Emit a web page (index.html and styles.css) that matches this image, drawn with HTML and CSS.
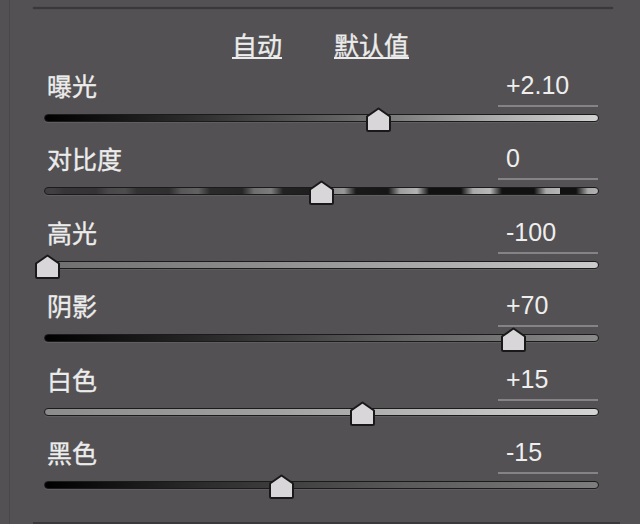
FILE: index.html
```html
<!DOCTYPE html>
<html lang="zh">
<head>
<meta charset="utf-8">
<link rel="stylesheet" href="styles.css">
</head>
<body>
<div class="frame">
  <div class="topline"></div>
  <div class="buttons">
    <span class="btn">自动</span>
    <span class="btn">默认值</span>
  </div>
  <div class="rows">
    <div class="row">
      <div class="head"><span class="label">曝光</span><span class="value">+2.10</span></div>
      <div class="track t-exposure"><svg class="thumb" style="left:320px" viewBox="0 0 27 25" width="27" height="25"><path d="M2 9.5 L13.5 1.5 L25 9.5 L25 22.5 Q25 24 23.5 24 L3.5 24 Q2 24 2 22.5 Z"/></svg></div>
    </div>
    <div class="row">
      <div class="head"><span class="label">对比度</span><span class="value">0</span></div>
      <div class="track t-contrast"><svg class="thumb" style="left:263px" viewBox="0 0 27 25" width="27" height="25"><path d="M2 9.5 L13.5 1.5 L25 9.5 L25 22.5 Q25 24 23.5 24 L3.5 24 Q2 24 2 22.5 Z"/></svg></div>
    </div>
    <div class="row">
      <div class="head"><span class="label">高光</span><span class="value">-100</span></div>
      <div class="track t-high"><svg class="thumb" style="left:-11px" viewBox="0 0 27 25" width="27" height="25"><path d="M2 9.5 L13.5 1.5 L25 9.5 L25 22.5 Q25 24 23.5 24 L3.5 24 Q2 24 2 22.5 Z"/></svg></div>
    </div>
    <div class="row">
      <div class="head"><span class="label">阴影</span><span class="value">+70</span></div>
      <div class="track t-shadow"><svg class="thumb" style="left:455px" viewBox="0 0 27 25" width="27" height="25"><path d="M2 9.5 L13.5 1.5 L25 9.5 L25 22.5 Q25 24 23.5 24 L3.5 24 Q2 24 2 22.5 Z"/></svg></div>
    </div>
    <div class="row">
      <div class="head"><span class="label">白色</span><span class="value">+15</span></div>
      <div class="track t-white"><svg class="thumb" style="left:304px" viewBox="0 0 27 25" width="27" height="25"><path d="M2 9.5 L13.5 1.5 L25 9.5 L25 22.5 Q25 24 23.5 24 L3.5 24 Q2 24 2 22.5 Z"/></svg></div>
    </div>
    <div class="row">
      <div class="head"><span class="label">黑色</span><span class="value">-15</span></div>
      <div class="track t-black"><svg class="thumb" style="left:223px" viewBox="0 0 27 25" width="27" height="25"><path d="M2 9.5 L13.5 1.5 L25 9.5 L25 22.5 Q25 24 23.5 24 L3.5 24 Q2 24 2 22.5 Z"/></svg></div>
    </div>
  </div>
  <div class="bottomline"></div>
</div>
</body>
</html>
```

FILE: styles.css
```css
html, body {
  margin: 0;
  padding: 0;
}
body {
  width: 640px;
  height: 524px;
  overflow: hidden;
  background: #535153;
  font-family: "Noto Sans CJK SC", "Noto Sans", sans-serif;
  color: #ececec;
}
.frame {
  position: relative;
  height: 524px;
  box-sizing: border-box;
  padding-top: 7px;
  border-left: 1px solid #4a484a;
  margin-left: 9px;
}
.topline {
  height: 2px;
  margin-left: 23px;
  width: 580px;
  background: #3a383a;
  box-shadow: 0 0 1px #3a383a;
}
.buttons {
  display: flex;
  justify-content: center;
  gap: 52px;
  margin-top: 20px;
  margin-left: -9px;
  height: 30px;
}
.btn {
  font-size: 25px;
  line-height: 30px;
  text-decoration: underline;
  text-decoration-thickness: 2px;
  text-underline-offset: 2px;
  -webkit-text-stroke: 0.35px #ececec;
}
.rows {
  margin-top: 11px;
  margin-left: 34px;
  width: 555px;
}
.row {
  height: 73.4px;
}
.head {
  display: flex;
  justify-content: space-between;
  align-items: flex-start;
}
.label {
  font-size: 25px;
  line-height: 30px;
  margin-left: 3px;
  -webkit-text-stroke: 0.35px #ececec;
}
.value {
  width: 92px;
  padding-left: 8px;
  margin-right: 1px;
  font-family: "Liberation Sans", Arial, sans-serif;
  font-size: 25px;
  line-height: 30px;
  padding-bottom: 5px;
  border-bottom: 2px solid #858385;
  color: #eeeeee;
}
.track {
  position: relative;
  margin-top: 7px;
  height: 8px;
  box-sizing: border-box;
  border: 1px solid #1c1b1c;
  border-radius: 4px;
  box-shadow: 0 1px 0 rgba(255,255,255,0.08);
}
.t-exposure {
  background: linear-gradient(90deg, #000 0%, #2a2a2a 25%, #666 55%, #a8a8a8 80%, #d2d2d2 100%);
}
.t-contrast {
  background:
    linear-gradient(90deg, rgba(58,56,58,0.95) 0%, rgba(58,56,58,0.8) 20%, rgba(58,56,58,0.4) 45%, rgba(58,56,58,0) 70%),
    repeating-linear-gradient(90deg, #111 0px, #111 16px, #a8a8a8 28px, #b8b8b8 45px, #111 57px, #111 73px);
  background-position: 0 0, -38px 0;
}
.t-high {
  background: linear-gradient(90deg, #6e6e6e 0%, #8e8e8e 40%, #b0b0b0 75%, #cccccc 100%);
}
.t-shadow {
  background: linear-gradient(90deg, #000 0%, #2a2a2a 30%, #606060 65%, #8a8a8a 100%);
}
.t-white {
  background: linear-gradient(90deg, #8c8c8c 0%, #a0a0a0 40%, #bcbcbc 75%, #d4d4d4 100%);
}
.t-black {
  background: linear-gradient(90deg, #000 0%, #2e2e2e 30%, #5a5a5a 65%, #7e7e7e 100%);
}
.thumb {
  position: absolute;
  top: -8px;
  display: block;
}
.thumb path {
  fill: #d8d6d8;
  stroke: #1a191a;
  stroke-width: 2;
  stroke-linejoin: round;
}
.bottomline {
  position: absolute;
  left: 23px;
  right: 20px;
  bottom: 0;
  height: 2px;
  background: #3a383a;
}
```
